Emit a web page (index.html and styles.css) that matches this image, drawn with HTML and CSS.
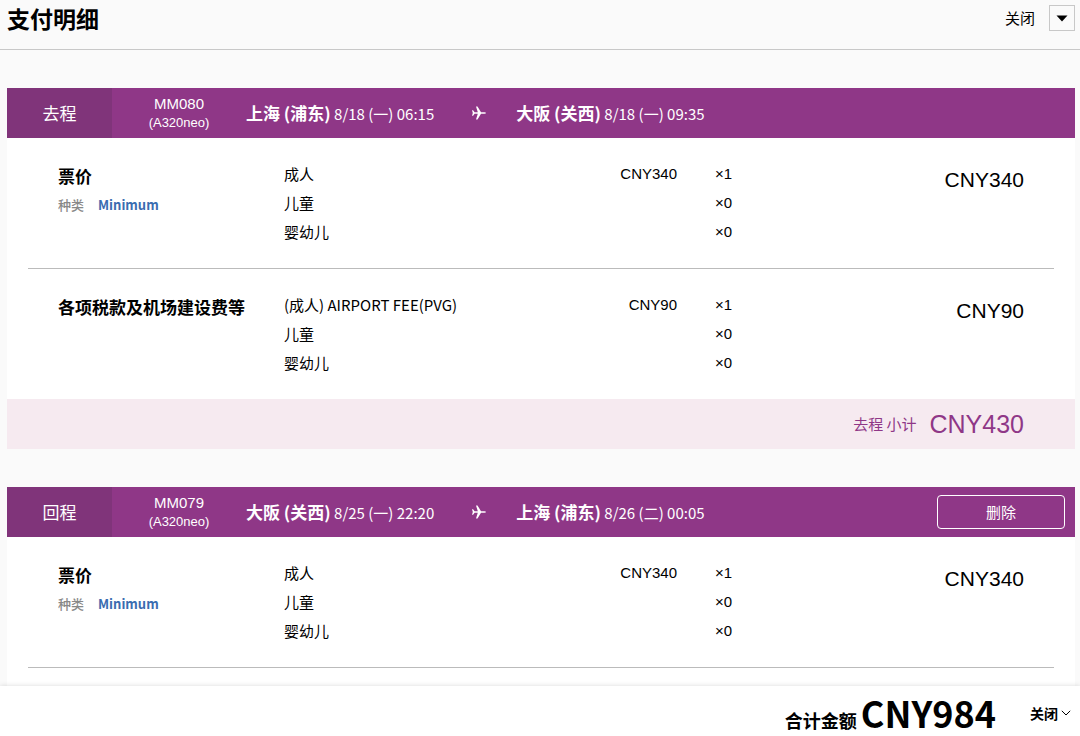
FILE: index.html
```html
<!DOCTYPE html>
<html lang="zh-CN">
<head>
  <meta charset="UTF-8">
  <meta name="viewport" content="width=device-width, initial-scale=1.0">
  <title>支付明细</title>
  <link rel="stylesheet" href="styles.css">
</head>
<body>
  <header class="page-header">
    <h1>支付明细</h1>
    <button class="close-top" type="button">
      <span>关闭</span>
      <span class="close-box">
        <svg width="12" height="7" viewBox="0 0 12 7"><path d="M0.5 0.5h11L6 6.5z"/></svg>
      </span>
    </button>
  </header>

  <main class="content">
    <section class="trip">
      <div class="trip-header">
        <div class="trip-tab">去程</div>
        <div class="flight">
          <div>MM080</div>
          <div class="aircraft">(A320neo)</div>
        </div>
        <div class="route">
          <div><strong>上海 (浦东)</strong> 8/18 (一) 06:15</div>
          <svg class="plane" width="14" height="14" viewBox="0 0 14 14"><path d="M0 4.2h1.1L2.6 6.2h3.2L4 0.4h1.5L9 6.2h3.4Q14 6.3 14 7t-1.6 0.8H9l-3.5 5.8H4l1.8-5.8H2.6L1.1 9.8H0L0.8 7z"/></svg>
          <div><strong>大阪 (关西)</strong> 8/18 (一) 09:35</div>
        </div>
      </div>
      <div class="item">
        <div class="item-name">
          <h2>票价</h2>
          <p class="kind">种类 <a href="#">Minimum</a></p>
        </div>
        <table class="passengers">
          <tr><td>成人</td><td class="price">CNY340</td><td class="count">×1</td></tr>
          <tr><td>儿童</td><td class="price"></td><td class="count">×0</td></tr>
          <tr><td>婴幼儿</td><td class="price"></td><td class="count">×0</td></tr>
        </table>
        <div class="amount">CNY340</div>
      </div>
      <div class="item">
        <div class="item-name">
          <h2>各项税款及机场建设费等</h2>
        </div>
        <table class="passengers">
          <tr><td>(成人) AIRPORT FEE(PVG)</td><td class="price">CNY90</td><td class="count">×1</td></tr>
          <tr><td>儿童</td><td class="price"></td><td class="count">×0</td></tr>
          <tr><td>婴幼儿</td><td class="price"></td><td class="count">×0</td></tr>
        </table>
        <div class="amount">CNY90</div>
      </div>
      <div class="subtotal">
        <span>去程 小计</span>
        <span class="subtotal-amount">CNY430</span>
      </div>
    </section>

    <section class="trip">
      <div class="trip-header">
        <div class="trip-tab">回程</div>
        <div class="flight">
          <div>MM079</div>
          <div class="aircraft">(A320neo)</div>
        </div>
        <div class="route">
          <div><strong>大阪 (关西)</strong> 8/25 (一) 22:20</div>
          <svg class="plane" width="14" height="14" viewBox="0 0 14 14"><path d="M0 4.2h1.1L2.6 6.2h3.2L4 0.4h1.5L9 6.2h3.4Q14 6.3 14 7t-1.6 0.8H9l-3.5 5.8H4l1.8-5.8H2.6L1.1 9.8H0L0.8 7z"/></svg>
          <div><strong>上海 (浦东)</strong> 8/26 (二) 00:05</div>
        </div>
        <button class="delete" type="button">删除</button>
      </div>
      <div class="item">
        <div class="item-name">
          <h2>票价</h2>
          <p class="kind">种类 <a href="#">Minimum</a></p>
        </div>
        <table class="passengers">
          <tr><td>成人</td><td class="price">CNY340</td><td class="count">×1</td></tr>
          <tr><td>儿童</td><td class="price"></td><td class="count">×0</td></tr>
          <tr><td>婴幼儿</td><td class="price"></td><td class="count">×0</td></tr>
        </table>
        <div class="amount">CNY340</div>
      </div>
      <div class="item"></div>
    </section>
  </main>

  <footer class="total-bar">
    <div class="total">合计金额 <span class="total-amount">CNY984</span></div>
    <button class="close-bottom" type="button">
      关闭
      <svg width="10" height="6" viewBox="0 0 10 6"><path d="M0.8 0.8L5 5l4.2-4.2"/></svg>
    </button>
  </footer>
</body>
</html>
```

FILE: styles.css
```css
* {
  box-sizing: border-box;
}

body {
  display: flex;
  flex-direction: column;
  height: 100vh;
  margin: 0;
  background-color: #fafafa;
  color: #000;
  font-family: "Noto Sans CJK SC", sans-serif;
  font-size: 15px;
  line-height: 24px;
}

h1, h2, p {
  margin: 0;
}

button {
  background: none;
  border: none;
  padding: 0;
  color: inherit;
  font: inherit;
  cursor: pointer;
}

.page-header {
  display: flex;
  flex-shrink: 0;
  justify-content: space-between;
  align-items: flex-start;
  height: 50px;
  padding: 5px 5px 0 7px;
  border-bottom: 1px solid #c8c8c8;
}

h1 {
  font-size: 23px;
  line-height: 26px;
}

.close-top {
  display: flex;
  align-items: center;
  gap: 14px;
}

.close-box {
  display: flex;
  justify-content: center;
  align-items: center;
  width: 26px;
  height: 26px;
  border: 1px solid #c8c8c8;
}

.content {
  flex: 1;
  min-height: 0;
  overflow: hidden;
  padding: 38px 5px 0 7px;
}

.trip {
  margin-bottom: 38px;
  background-color: #fff;
}

.trip-header {
  display: flex;
  align-items: center;
  height: 50px;
  background-color: #8f3787;
  color: #fff;
}

.trip-tab {
  width: 105px;
  background-color: #80347a;
  font-size: 17px;
  line-height: 50px;
  text-align: center;
}

.flight {
  width: 134px;
  font-family: "Liberation Sans", Arial, sans-serif;
  line-height: 19px;
  text-align: center;
}

.aircraft {
  font-size: 13px;
}

.route {
  display: flex;
  flex: 1;
  align-items: center;
}

.route strong {
  font-size: 17px;
}

.plane {
  margin: 0 30px 0 38px;
  fill: #fff;
}

.delete {
  width: 128px;
  height: 34px;
  margin-right: 10px;
  border: 1px solid #fff;
  border-radius: 4px;
}

.item {
  display: grid;
  grid-template-columns: 226fr 450fr 290fr;
  align-items: start;
  margin: 0 21px;
  padding: 21px 30px 22px;
}

.item + .item {
  border-top: 1px solid #bbb;
}

.item-name {
  padding-top: 4px;
}

h2 {
  font-size: 17px;
  line-height: 26px;
  white-space: nowrap;
}

.kind {
  display: flex;
  gap: 14px;
  margin-top: 4px;
  color: #888;
  font-size: 13px;
  font-weight: 500;
}

.kind a {
  color: #3a6cb0;
  font-weight: bold;
  text-decoration: none;
}

.passengers {
  width: 100%;
  border-collapse: collapse;
}

.passengers td {
  height: 29px;
  padding: 0;
}

.passengers .price,
.passengers .count {
  font-family: "Liberation Sans", Arial, sans-serif;
}

.passengers .price {
  text-align: right;
}

.passengers .count {
  width: 57px;
  padding-left: 38px;
}

.amount {
  padding-top: 9px;
  font-family: "Liberation Sans", Arial, sans-serif;
  font-size: 21px;
  text-align: right;
}

.subtotal {
  display: flex;
  justify-content: flex-end;
  align-items: center;
  gap: 13px;
  height: 50px;
  padding-right: 51px;
  background-color: #f6eaf0;
  color: #8f3787;
}

.subtotal-amount {
  font-family: "Liberation Sans", Arial, sans-serif;
  font-size: 25px;
}

.total-bar {
  display: flex;
  flex-shrink: 0;
  justify-content: flex-end;
  align-items: center;
  gap: 34px;
  height: 50px;
  padding: 4px 9px 0 0;
  background-color: #fff;
  box-shadow: 0 0 5px rgba(0, 0, 0, 0.15);
  font-weight: bold;
  z-index: 1;
}

.total {
  padding-top: 6px;
  font-size: 18px;
  line-height: 44px;
}

.total-amount {
  font-size: 36px;
}

.close-bottom {
  display: flex;
  align-items: center;
  gap: 3px;
  font-size: 14px;
}

.close-bottom svg {
  fill: none;
  stroke: #000;
}
```
